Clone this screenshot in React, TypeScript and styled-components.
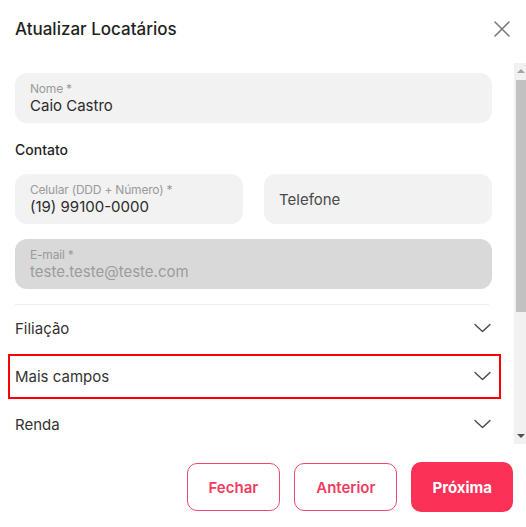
import styled, { createGlobalStyle } from "styled-components";

const GlobalStyle = createGlobalStyle`
  html, body {
    margin: 0;
    padding: 0;
    background: #fff;
  }
  body {
    font-family: Inter, "Noto Sans", sans-serif;
    color: #222;
  }
  * {
    box-sizing: border-box;
  }
`;

const sections = ["Filiação", "Mais campos", "Renda"];

const Chevron = () => (
  <svg width="17" height="10" viewBox="0 0 17 10" fill="none">
    <path
      d="M1 1.5 L8.5 8.5 L16 1.5"
      stroke="#4a4a4a"
      strokeWidth="1.4"
      strokeLinecap="round"
      strokeLinejoin="round"
    />
  </svg>
);

export default function App() {
  return (
    <>
      <GlobalStyle />
      <Modal>
        <Header>
          <Title>Atualizar Locatários</Title>
          <CloseButton aria-label="Fechar">
            <svg width="18" height="18" viewBox="0 0 18 18">
              <path
                d="M2 2 L16 16 M16 2 L2 16"
                stroke="#7a7a7a"
                strokeWidth="1.6"
                strokeLinecap="round"
              />
            </svg>
          </CloseButton>
        </Header>

        <BodyWrap>
          <Body>
            <Field>
              <Label>Nome *</Label>
              <Value>Caio Castro</Value>
            </Field>

            <SectionTitle>Contato</SectionTitle>

            <Row>
              <Field>
                <Label>Celular (DDD + Número) *</Label>
                <Value>(19) 99100-0000</Value>
              </Field>
              <Field>
                <Placeholder>Telefone</Placeholder>
              </Field>
            </Row>

            <Field $disabled>
              <Label>E-mail *</Label>
              <Value $disabled>teste.teste@teste.com</Value>
            </Field>

            <Accordion>
              {sections.map((s) => (
                <AccordionRow key={s} $highlight={s === "Mais campos"}>
                  <span>{s}</span>
                  <Chevron />
                </AccordionRow>
              ))}
            </Accordion>
          </Body>

          <ScrollTrack>
            <ScrollArrow>
              <ArrowUp />
            </ScrollArrow>
            <ThumbArea>
              <Thumb />
            </ThumbArea>
            <ScrollArrow>
              <ArrowDown />
            </ScrollArrow>
          </ScrollTrack>
        </BodyWrap>

        <Footer>
          <OutlineButton>Fechar</OutlineButton>
          <OutlineButton>Anterior</OutlineButton>
          <PrimaryButton>Próxima</PrimaryButton>
        </Footer>
      </Modal>
    </>
  );
}

//styles
const Modal = styled.div`
  width: 526px;
  height: 527px;
  display: flex;
  flex-direction: column;
  background: #fff;
  overflow: hidden;
`;

const Header = styled.div`
  height: 63px;
  flex-shrink: 0;
  display: flex;
  align-items: center;
  justify-content: space-between;
  padding: 0 15px 6px 15px;
`;

const Title = styled.h2`
  margin: 0;
  font-size: 17px;
  font-weight: 500;
  color: #1f1f1f;
`;

const CloseButton = styled.button`
  border: none;
  background: none;
  padding: 0;
  display: flex;
  cursor: pointer;
`;

const BodyWrap = styled.div`
  height: 381px;
  flex-shrink: 0;
  display: flex;
`;

const Body = styled.div`
  flex: 1;
  overflow: hidden;
  padding: 10px 22px 0 15px;
  display: flex;
  flex-direction: column;
`;

const ScrollTrack = styled.div`
  width: 12px;
  flex-shrink: 0;
  background: #f1f1f1;
  display: flex;
  flex-direction: column;
`;

const ScrollArrow = styled.div`
  height: 16px;
  flex-shrink: 0;
  display: flex;
  align-items: center;
  justify-content: center;
  padding-left: 2px;
`;

const ArrowUp = styled.div`
  width: 0;
  height: 0;
  border-left: 4px solid transparent;
  border-right: 4px solid transparent;
  border-bottom: 4px solid #a3a3a3;
`;

const ArrowDown = styled.div`
  width: 0;
  height: 0;
  border-left: 4px solid transparent;
  border-right: 4px solid transparent;
  border-top: 4px solid #505050;
`;

const ThumbArea = styled.div`
  flex: 1;
  padding: 1px 0 0 2px;
`;

const Thumb = styled.div`
  height: 232px;
  background: #c1c1c1;
`;

const Field = styled.div<{ $disabled?: boolean }>`
  flex-shrink: 0;
  height: 50px;
  border-radius: 12px;
  background: ${(p) => (p.$disabled ? "#d9d9d9" : "#f2f2f2")};
  padding: 0 15px;
  display: flex;
  flex-direction: column;
  justify-content: center;
  margin-bottom: 15px;
`;

const Label = styled.span`
  font-size: 12px;
  color: #9a9a9a;
  line-height: 15px;
  letter-spacing: -0.2px;
`;

const Value = styled.span<{ $disabled?: boolean }>`
  font-size: 15px;
  line-height: 19px;
  color: ${(p) => (p.$disabled ? "#9c9c9c" : "#2b2b2b")};
`;

const Placeholder = styled.span`
  font-size: 15px;
  color: #4a4a4a;
`;

const SectionTitle = styled.h3`
  margin: 2px 0 14px 0;
  font-size: 14px;
  font-weight: 500;
  color: #1f1f1f;
  line-height: 20px;
`;

const Row = styled.div`
  display: flex;
  gap: 21px;

  & > ${Field} {
    flex: 1;
  }
`;

const Accordion = styled.div`
  border-top: 1px solid #ececec;
  margin-right: 3px;
  display: flex;
  flex-direction: column;
`;

const AccordionRow = styled.div<{ $highlight?: boolean }>`
  position: relative;
  height: 48px;
  flex-shrink: 0;
  display: flex;
  align-items: center;
  justify-content: space-between;
  font-size: 15px;
  color: #333;
  margin-right: -2px;
  padding-bottom: 2px;

  &::after {
    content: "";
    display: ${(p) => (p.$highlight ? "block" : "none")};
    position: absolute;
    left: -7px;
    right: -10px;
    top: 1px;
    bottom: 2px;
    border: 2px solid #f00;
    pointer-events: none;
  }
`;

const Footer = styled.div`
  flex: 1;
  display: flex;
  justify-content: flex-end;
  align-items: center;
  gap: 14px;
  padding: 3px 13px 0 0;
`;

const OutlineButton = styled.button`
  height: 48px;
  padding: 0 21px;
  border-radius: 10px;
  border: 1px solid #f2476a;
  background: #fff;
  color: #f23c62;
  font-family: Inter, "Noto Sans", sans-serif;
  font-size: 15px;
  font-weight: 600;
  cursor: pointer;
`;

const PrimaryButton = styled.button`
  height: 50px;
  padding: 0 21px;
  border-radius: 10px;
  border: none;
  background: #fc3157;
  color: #fff;
  font-family: Inter, "Noto Sans", sans-serif;
  font-size: 15px;
  font-weight: 700;
  cursor: pointer;
`;
